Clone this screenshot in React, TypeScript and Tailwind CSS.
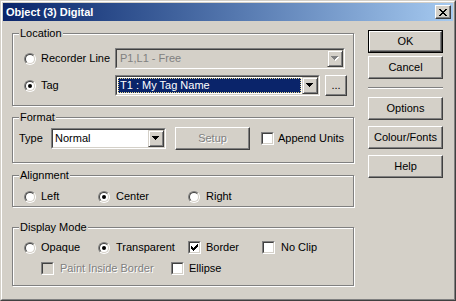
import React from "react";

const FONT = "font-['Liberation_Sans',Arial,sans-serif]";

function Radio({ checked = false }: { checked?: boolean }) {
  return (
    <span className="flex w-[12px] h-[12px] shrink-0 rounded-full border border-t-[#808080] border-l-[#808080] border-r-white border-b-white">
      <span className="flex w-full h-full items-center justify-center rounded-full border border-t-[#404040] border-l-[#404040] border-r-[#d4d0c8] border-b-[#d4d0c8] bg-white">
        {checked && <span className="block w-[4px] h-[4px] rounded-full bg-black" />}
      </span>
    </span>
  );
}

function Check({ checked = false, disabled = false }: { checked?: boolean; disabled?: boolean }) {
  return (
    <span className="flex w-[13px] h-[13px] shrink-0 border border-t-[#808080] border-l-[#808080] border-r-white border-b-white">
      <span
        className={`flex w-full h-full items-center justify-center border border-t-[#404040] border-l-[#404040] border-r-[#d4d0c8] border-b-[#d4d0c8] ${
          disabled ? "bg-[#d4d0c8]" : "bg-white"
        }`}
      >
        {checked && (
          <svg width="7" height="7" viewBox="0 0 7 7" shapeRendering="crispEdges">
            <path d="M0 2h1v3h-1zM1 3h1v3h-1zM2 4h1v3h-1zM3 3h1v3h-1zM4 2h1v3h-1zM5 1h1v3h-1zM6 0h1v3h-1z" fill="#000" />
          </svg>
        )}
      </span>
    </span>
  );
}

function Arrow({ disabled = false }: { disabled?: boolean }) {
  return (
    <svg width="8" height="5" viewBox="0 0 8 5" shapeRendering="crispEdges">
      {disabled && <path d="M1 1h7v1h-1v1h-1v1h-1v1h-1v-1h-1v-1h-1v-1h-1z" fill="#fff" />}
      <path d="M0 0h7v1h-1v1h-1v1h-1v1h-1v-1h-1v-1h-1v-1h-1z" fill={disabled ? "#808080" : "#000"} />
    </svg>
  );
}

function DropBtn({ disabled = false }: { disabled?: boolean }) {
  return (
    <span className="flex w-[16px] h-full shrink-0 items-center justify-center border border-t-[#d4d0c8] border-l-[#d4d0c8] border-r-[#404040] border-b-[#404040] bg-[#d4d0c8] shadow-[inset_1px_1px_0_#fff,inset_-1px_-1px_0_#808080]">
      <Arrow disabled={disabled} />
    </span>
  );
}

function Combo({
  className,
  text,
  disabled = false,
  selected = false,
}: {
  className: string;
  text: string;
  disabled?: boolean;
  selected?: boolean;
}) {
  return (
    <div className={`flex h-[21px] shrink-0 border border-t-[#808080] border-l-[#808080] border-r-white border-b-white ${className}`}>
      <div
        className={`flex flex-1 min-w-0 border border-t-[#404040] border-l-[#404040] border-r-[#d4d0c8] border-b-[#d4d0c8] ${
          disabled ? "bg-[#d4d0c8]" : "bg-white"
        }`}
      >
        {selected ? (
          <div className="flex flex-1 p-px">
            <div className="flex flex-1 items-center border border-dotted border-[#e8d890] bg-[#0a246a] text-white pl-px">
              {text}
            </div>
          </div>
        ) : (
          <div className={`flex flex-1 items-center ${disabled ? "pl-[3px] text-[#808080]" : "pl-[2px]"}`}>{text}</div>
        )}
        <DropBtn disabled={disabled} />
      </div>
    </div>
  );
}

function Btn({
  className,
  children,
  isDefault = false,
  disabled = false,
}: {
  className: string;
  children: React.ReactNode;
  isDefault?: boolean;
  disabled?: boolean;
}) {
  const face = (
    <div className="flex flex-1 items-center justify-center border border-t-white border-l-white border-r-[#404040] border-b-[#404040] shadow-[inset_-1px_-1px_0_#808080]">
      <span className={disabled ? "text-[#808080] [text-shadow:1px_1px_0_#fff]" : ""}>{children}</span>
    </div>
  );
  return (
    <div className={`flex shrink-0 ${isDefault ? "border border-black" : ""} ${className}`}>{face}</div>
  );
}

function Group({ label, className, children }: { label: string; className: string; children: React.ReactNode }) {
  return (
    <div className={`relative border border-[#808080] shadow-[inset_1px_1px_0_#fff,1px_1px_0_#fff] ${className}`}>
      <span className="absolute left-[6px] top-[-7px] px-px bg-[#d4d0c8]">{label}</span>
      {children}
    </div>
  );
}

export default function App() {
  return (
    <div
      className={`w-[456px] h-[301px] bg-[#d4d0c8] border border-t-[#d4d0c8] border-l-[#d4d0c8] border-r-[#404040] border-b-[#404040] text-[11px] leading-[13px] text-black ${FONT}`}
    >
      <div className="flex flex-col h-full border border-t-white border-l-white border-r-[#808080] border-b-[#808080] p-px">
        {/* Title bar */}
        <div className="flex h-[18px] shrink-0 items-center justify-between bg-linear-to-r from-[#0a246a] to-[#a6caf0] pl-[3px] pr-[2px]">
          <span className="font-bold text-white">Object (3) Digital</span>
          <div className="flex w-[16px] h-[14px] items-center justify-center border border-t-white border-l-white border-r-[#404040] border-b-[#404040] bg-[#d4d0c8] shadow-[inset_-1px_-1px_0_#808080]">
            <svg width="8" height="7" viewBox="0 0 8 7" shapeRendering="crispEdges">
              <path
                d="M0 0h2v1h-2zM6 0h2v1h-2zM1 1h2v1h-2zM5 1h2v1h-2zM2 2h4v1h-4zM3 3h2v1h-2zM2 4h4v1h-4zM1 5h2v1h-2zM5 5h2v1h-2zM0 6h2v1h-2zM6 6h2v1h-2z"
                fill="#000"
              />
            </svg>
          </div>
        </div>

        {/* Body */}
        <div className="flex flex-1 pl-[9px]">
          {/* Left column */}
          <div className="flex flex-col w-[343px] pt-[12px]">
            <Group label="Location" className="w-[342px] h-[73px]">
              <div className="flex flex-col pl-[11px] pt-[14px] gap-[6px]">
                <div className="flex items-center">
                  <div className="flex w-[91px] items-center">
                    <Radio />
                    <span className="ml-[5px]">Recorder Line</span>
                  </div>
                  <Combo className="w-[230px]" text="P1,L1 - Free" disabled />
                </div>
                <div className="flex items-center">
                  <div className="flex w-[91px] items-center">
                    <Radio checked />
                    <span className="ml-[5px]">Tag</span>
                  </div>
                  <Combo className="w-[205px]" text="T1 : My Tag Name" selected />
                  <Btn className="ml-[5px] w-[22px] h-[21px]">...</Btn>
                </div>
              </div>
            </Group>

            <Group label="Format" className="w-[342px] h-[46px] mt-[11px]">
              <div className="flex items-center pl-[6px] pt-[9px]">
                <span className="w-[32px]">Type</span>
                <Combo className="w-[115px]" text="Normal" />
                <Btn className="ml-[9px] w-[75px] h-[23px]" disabled>
                  Setup
                </Btn>
                <div className="flex items-center ml-[11px]">
                  <Check />
                  <span className="ml-[4px]">Append Units</span>
                </div>
              </div>
            </Group>

            <Group label="Alignment" className="w-[342px] h-[32px] mt-[12px]">
              <div className="flex items-center pl-[11px] pt-[14px]">
                <div className="flex w-[74px] items-center">
                  <Radio />
                  <span className="ml-[5px]">Left</span>
                </div>
                <div className="flex w-[90px] items-center">
                  <Radio checked />
                  <span className="ml-[6px]">Center</span>
                </div>
                <div className="flex items-center">
                  <Radio />
                  <span className="ml-[6px]">Right</span>
                </div>
              </div>
            </Group>

            <Group label="Display Mode" className="w-[342px] h-[59px] mt-[20px]">
              <div className="flex flex-col pl-[11px] pt-[13px] gap-[8px]">
                <div className="flex items-center h-[13px]">
                  <div className="flex w-[74px] items-center">
                    <Radio />
                    <span className="ml-[5px]">Opaque</span>
                  </div>
                  <div className="flex w-[90px] items-center">
                    <Radio checked />
                    <span className="ml-[6px]">Transparent</span>
                  </div>
                  <div className="flex w-[74px] items-center">
                    <Check checked />
                    <span className="ml-[5px]">Border</span>
                  </div>
                  <div className="flex items-center">
                    <Check />
                    <span className="ml-[6px]">No Clip</span>
                  </div>
                </div>
                <div className="flex items-center h-[13px]">
                  <div className="flex w-[147px] items-center pl-[17px]">
                    <Check disabled />
                    <span className="ml-[6px] text-[#808080] [text-shadow:1px_1px_0_#fff]">Paint Inside Border</span>
                  </div>
                  <div className="flex items-center">
                    <Check />
                    <span className="ml-[5px]">Ellipse</span>
                  </div>
                </div>
              </div>
            </Group>
          </div>

          {/* Right column */}
          <div className="flex flex-col w-[75px] ml-[13px] pt-[9px]">
            <Btn className="w-[75px] h-[23px]" isDefault>
              OK
            </Btn>
            <Btn className="w-[75px] h-[23px] mt-[3px]">Cancel</Btn>
            <div className="mt-[8px] h-[2px] border-t border-t-[#808080] border-b border-b-white" />
            <Btn className="w-[75px] h-[23px] mt-[8px]">Options</Btn>
            <Btn className="w-[75px] h-[23px] mt-[6px]">Colour/Fonts</Btn>
            <Btn className="w-[75px] h-[23px] mt-[6px]">Help</Btn>
          </div>
        </div>
      </div>
    </div>
  );
}
